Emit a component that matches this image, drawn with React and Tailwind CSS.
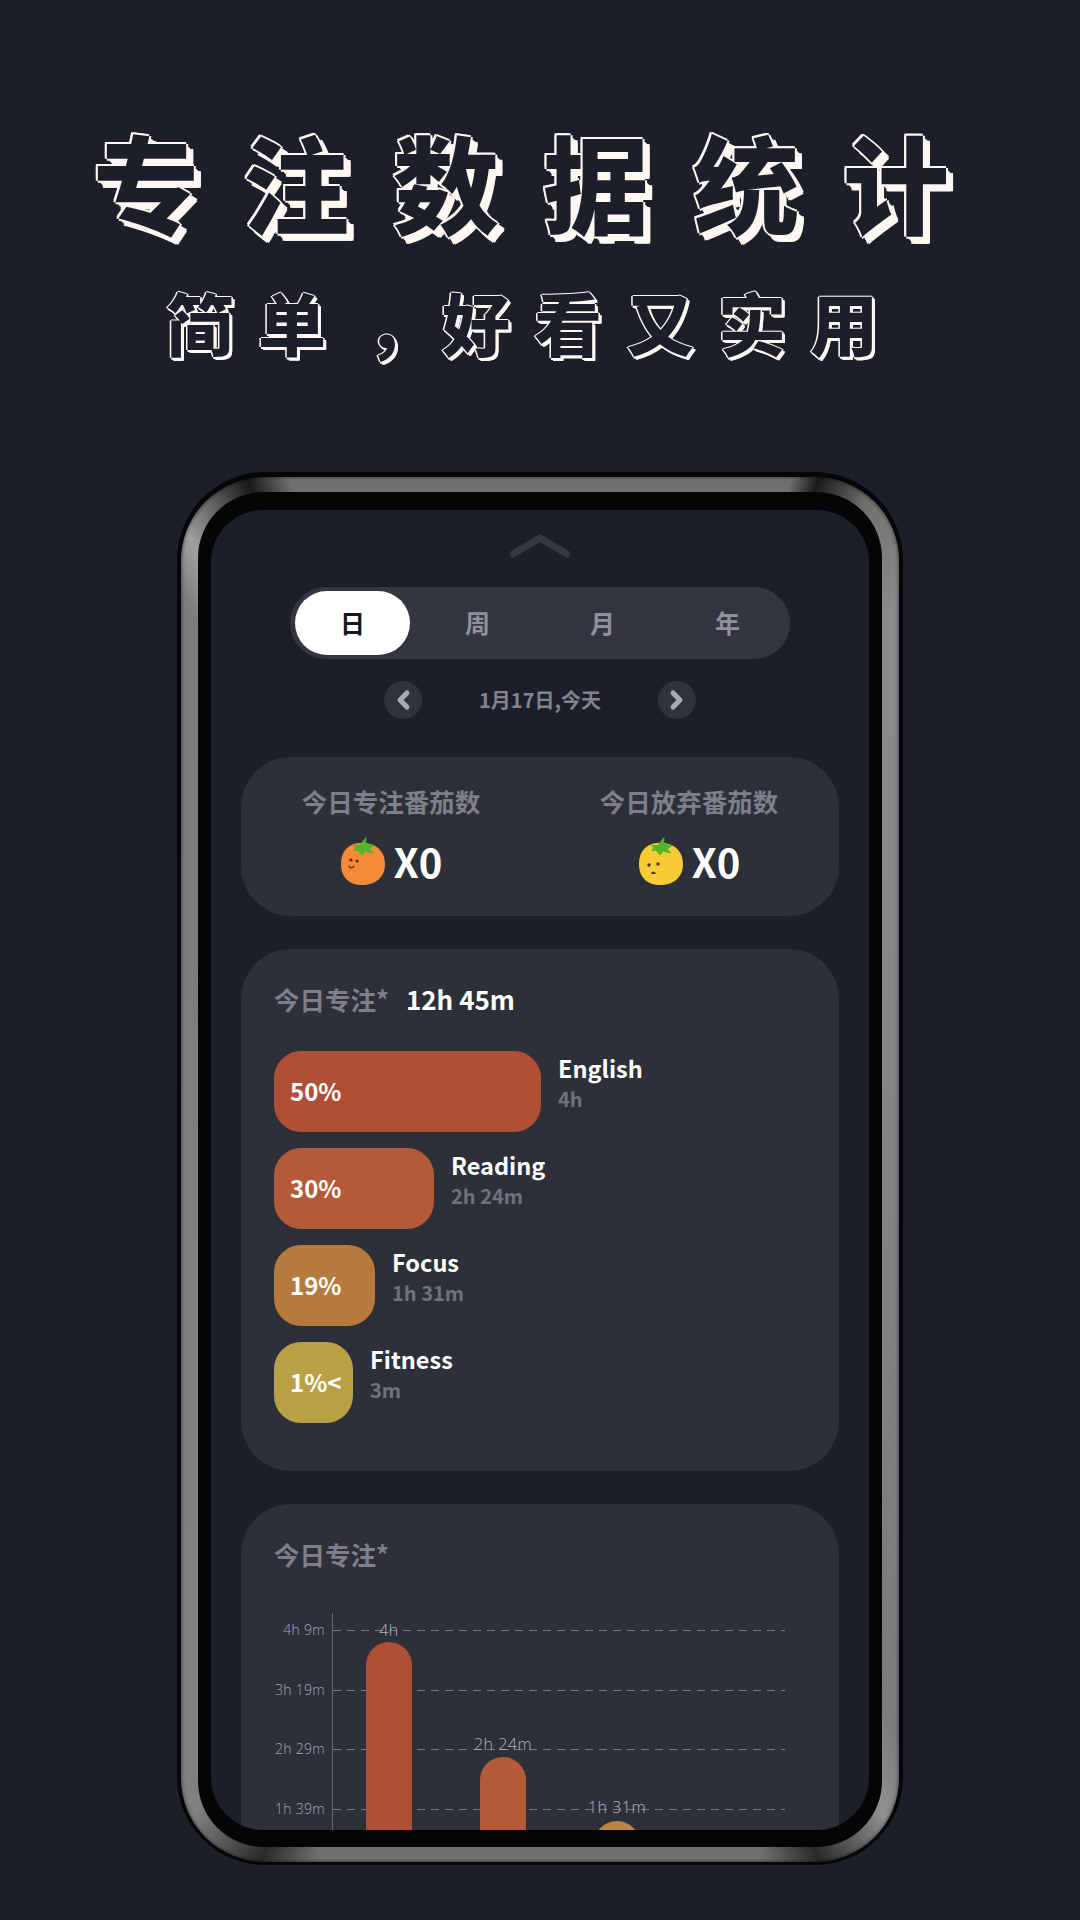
const cjk = "font-['Noto_Sans_CJK_SC','Noto_Sans',sans-serif]";

const titleChars = ["专", "注", "数", "据", "统", "计"];
const subChars = ["简", "单", "，", "好", "看", "又", "实", "用"];

const tabs = ["日", "周", "月", "年"];

const rows = [
  { pct: "50%", name: "English", time: "4h", bar: "w-[267px] bg-[#b04f36]" },
  { pct: "30%", name: "Reading", time: "2h 24m", bar: "w-[160px] bg-[#b35a38]" },
  { pct: "19%", name: "Focus", time: "1h 31m", bar: "w-[101px] bg-[#b67a3e]" },
  { pct: "1%<", name: "Fitness", time: "3m", bar: "w-[79px] bg-[#b9a047]" },
];

const gridLabels = ["4h 9m", "3h 19m", "2h 29m", "1h 39m"];

const chartBars = [
  { label: "4h", left: "left-[33px]", top: "top-[29px]", labelTop: "top-[6px]", color: "bg-[#b04f36]" },
  { label: "2h 24m", left: "left-[147px]", top: "top-[144px]", labelTop: "top-[120px]", color: "bg-[#b35a38]" },
  { label: "1h 31m", left: "left-[261px]", top: "top-[208px]", labelTop: "top-[183px]", color: "bg-[#bf8540]" },
];

function Tomato({ body, sad }) {
  return (
    <svg width="46" height="50" viewBox="0 0 46 50">
      <path
        d="M23 7C11 6 1 13 1 28c0 14 9 21 21 21 13 0 23-7 23-21C45 14 35 7 23 7Z"
        fill={body}
      />
      <path
        d="M13 9.500l7 0L26 1.500l-0.500 6.500L34 9.500l-5 3.500 4 4-8-2-3 4-4-5-4 1 2-4Z"
        fill="#4fb529"
        stroke="#4fb529"
        strokeWidth="1"
        strokeLinejoin="round"
      />
      {sad ? (
        <>
          <circle cx="11" cy="29" r="1.700" fill="#4a3410" />
          <circle cx="20" cy="28" r="1.700" fill="#4a3410" />
          <path d="M13 38c0.500-3.500 4-3.500 5 0Z" fill="#4a3410" />
        </>
      ) : (
        <>
          <circle cx="11" cy="24" r="1.600" fill="#5a2a10" />
          <circle cx="17" cy="25" r="1.600" fill="#5a2a10" />
          <path d="M9 30c1 2.500 3.500 2.500 5 0" fill="none" stroke="#5a2a10" strokeWidth="1.300" strokeLinecap="round" />
        </>
      )}
    </svg>
  );
}

function Chevron({ flip }) {
  return (
    <svg width="16" height="22" viewBox="0 0 16 22" className={flip ? "rotate-180" : ""}>
      <path d="M12 4 5 11l7 7" fill="none" stroke="#a9abb3" strokeWidth="5" strokeLinecap="round" strokeLinejoin="round" />
    </svg>
  );
}

function PomodoroStat({ label, body, sad }) {
  return (
    <div className="flex w-[240px] flex-col items-center">
      <div className="text-[25.500px] leading-[36px] font-semibold text-[#7d7f89]">{label}</div>
      <div className="mt-[17px] flex items-center gap-[8px]">
        <Tomato body={body} sad={sad} />
        <span className="text-[40px] leading-[50px] font-semibold text-white">X0</span>
      </div>
    </div>
  );
}

export default function App() {
  return (
    <div className={`h-[1920px] w-[1080px] overflow-hidden bg-[#1c1f29] ${cjk}`}>
      <h1 className="ml-[71px] flex pt-[114px] text-[106px] leading-[132px] font-black text-[#1c1f29] [text-shadow:-2px_0_0_#fff8f2,2px_0_0_#fff8f2,0_-2px_0_#fff8f2,0_2px_0_#fff8f2,-2px_-2px_0_#fff8f2,3px_3px_0_#fff8f2,4px_4px_0_#fff8f2,5px_5px_0_#fff8f2,6px_6px_0_#fff8f2,7px_7px_0_#fff8f2,7px_5px_0_#fff8f2,5px_7px_0_#fff8f2]">
        {titleChars.map((c) => (
          <span key={c} className="w-[150px] text-center">{c}</span>
        ))}
      </h1>
      <p className="mt-[31px] ml-[154px] flex text-[68px] leading-[90px] font-black text-[#1c1f29] [text-shadow:-1.500px_0_0_#fff8f2,1.500px_0_0_#fff8f2,0_-1.500px_0_#fff8f2,0_1.500px_0_#fff8f2,2px_2px_0_#fff8f2,3px_3px_0_#fff8f2,3px_2px_0_#fff8f2,2px_3px_0_#fff8f2]">
        {subChars.map((c) => (
          <span key={c} className={c === "，" ? "w-[92px] translate-x-[16px] text-center" : "w-[92px] text-center"}>{c}</span>
        ))}
      </p>

      {/* phone frame */}
      <div className="mx-auto mt-[105px] h-[1393px] w-[726px] rounded-[88px] bg-[#050608] px-[4px] pt-[5px] pb-[3px]">
        <div className="h-full rounded-[84px] bg-[conic-gradient(#70716e_0deg,#70716e_20deg,#1a1a1a_22deg,#6f6f6c_26deg,#8a8a8a_32deg,#7c7c7c_148deg,#909090_152deg,#2a2a2a_158deg,#6f706d_162deg,#6f706d_198deg,#2a2a2a_202deg,#808080_208deg,#7c7c7c_328deg,#a0a0a0_331deg,#1a1a1a_337deg,#70716e_340deg)] px-[17px] py-[15px] shadow-[inset_0_0_4px_rgba(0,0,0,0.6)]">
          <div className="h-full rounded-[66px] bg-[#040507] px-[13px] pt-[18px] pb-[17px]">
            <div className="h-full overflow-hidden rounded-[52px] bg-[#1c1f29] px-[30px]">
              <svg width="60" height="24" viewBox="0 0 60 24" className="mx-auto mt-[24px]">
                <path d="M3 20 30 4l27 16" fill="none" stroke="#343843" strokeWidth="7" strokeLinecap="round" strokeLinejoin="round" />
              </svg>

              <div className="mx-auto mt-[29px] flex h-[72px] w-[500px] items-center rounded-full bg-[#333640]">
                {tabs.map((t, i) => (
                  <div key={t} className="flex h-full w-[125px] items-center justify-center py-[4px]">
                    <div
                      className={
                        i === 0
                          ? "flex h-full w-[115px] items-center justify-center rounded-full bg-white text-[25px] font-bold text-[#17181c]"
                          : "text-[25px] font-bold text-[#8f919b]"
                      }
                    >
                      {t}
                    </div>
                  </div>
                ))}
              </div>

              <div className="mx-auto mt-[22px] flex h-[38px] w-[312px] items-center justify-between">
                <div className="flex h-[38px] w-[38px] items-center justify-center rounded-full bg-[#30333d]">
                  <Chevron />
                </div>
                <span className="text-[20px] font-bold text-[#82848e]">1月17日,今天</span>
                <div className="flex h-[38px] w-[38px] items-center justify-center rounded-full bg-[#30333d]">
                  <Chevron flip />
                </div>
              </div>

              <div className="mt-[38px] flex h-[159px] items-start justify-between rounded-[50px] bg-[#2d3039] px-[30px] pt-[26px]">
                <PomodoroStat label="今日专注番茄数" body="#f58a38" />
                <PomodoroStat label="今日放弃番茄数" body="#fbcb36" sad />
              </div>

              <div className="mt-[33px] h-[522px] rounded-[50px] bg-[#2d3039] px-[33px] pt-[32px]">
                <div className="flex items-center gap-[17px] leading-[36px]">
                  <span className="text-[25.500px] font-semibold text-[#7d7f89]">今日专注*</span>
                  <span className="text-[26px] font-semibold text-white">12h 45m</span>
                </div>
                <div className="mt-[34px] flex flex-col gap-[16px]">
                  {rows.map((r) => (
                    <div key={r.name} className="flex items-start gap-[17px]">
                      <div className={`flex h-[81px] items-center rounded-[27px] pb-[2px] pl-[16px] text-[24px] font-semibold text-white ${r.bar}`}>
                        {r.pct}
                      </div>
                      <div>
                        <div className="text-[23.500px] leading-[34px] font-semibold text-white">{r.name}</div>
                        <div className="text-[20px] leading-[28px] font-semibold text-[#6f727c]">{r.time}</div>
                      </div>
                    </div>
                  ))}
                </div>
              </div>

              <div className="mt-[33px] h-[400px] rounded-[50px] bg-[#2d3039] px-[33px] pt-[32px]">
                <div className="text-[25.500px] leading-[36px] font-semibold text-[#7d7f89]">今日专注*</div>

                {/* chart */}
                <div className="relative mt-[41px] ml-[58px] h-[300px] w-[453px] border-l border-[#666973]">
                  <div className="flex flex-col pt-[17px]">
                    {gridLabels.map((g) => (
                      <div key={g} className="relative h-[59.700px]">
                        <div className="h-px bg-[repeating-linear-gradient(90deg,#767982_0px,#767982_8px,transparent_8px,transparent_14px)]" />
                        <span className="absolute top-[-10px] right-[calc(100%+8px)] whitespace-nowrap font-['Open_Sans',sans-serif] text-[14px] leading-[20px] font-light tracking-[0.3px] text-[#a6a8af]">
                          {g}
                        </span>
                      </div>
                    ))}
                  </div>
                  {chartBars.map((b) => (
                    <div key={b.label}>
                      <div className={`absolute h-[260px] w-[46px] rounded-t-full ${b.left} ${b.top} ${b.color}`} />
                      <div className={`absolute w-[46px] ${b.left} ${b.labelTop} flex justify-center`}>
                        <span className="whitespace-nowrap font-['Open_Sans',sans-serif] text-[16px] leading-[22px] font-light tracking-[0.5px] text-[#b4b6bc]">
                          {b.label}
                        </span>
                      </div>
                    </div>
                  ))}
                </div>
              </div>
            </div>
          </div>
        </div>
      </div>
    </div>
  );
}
